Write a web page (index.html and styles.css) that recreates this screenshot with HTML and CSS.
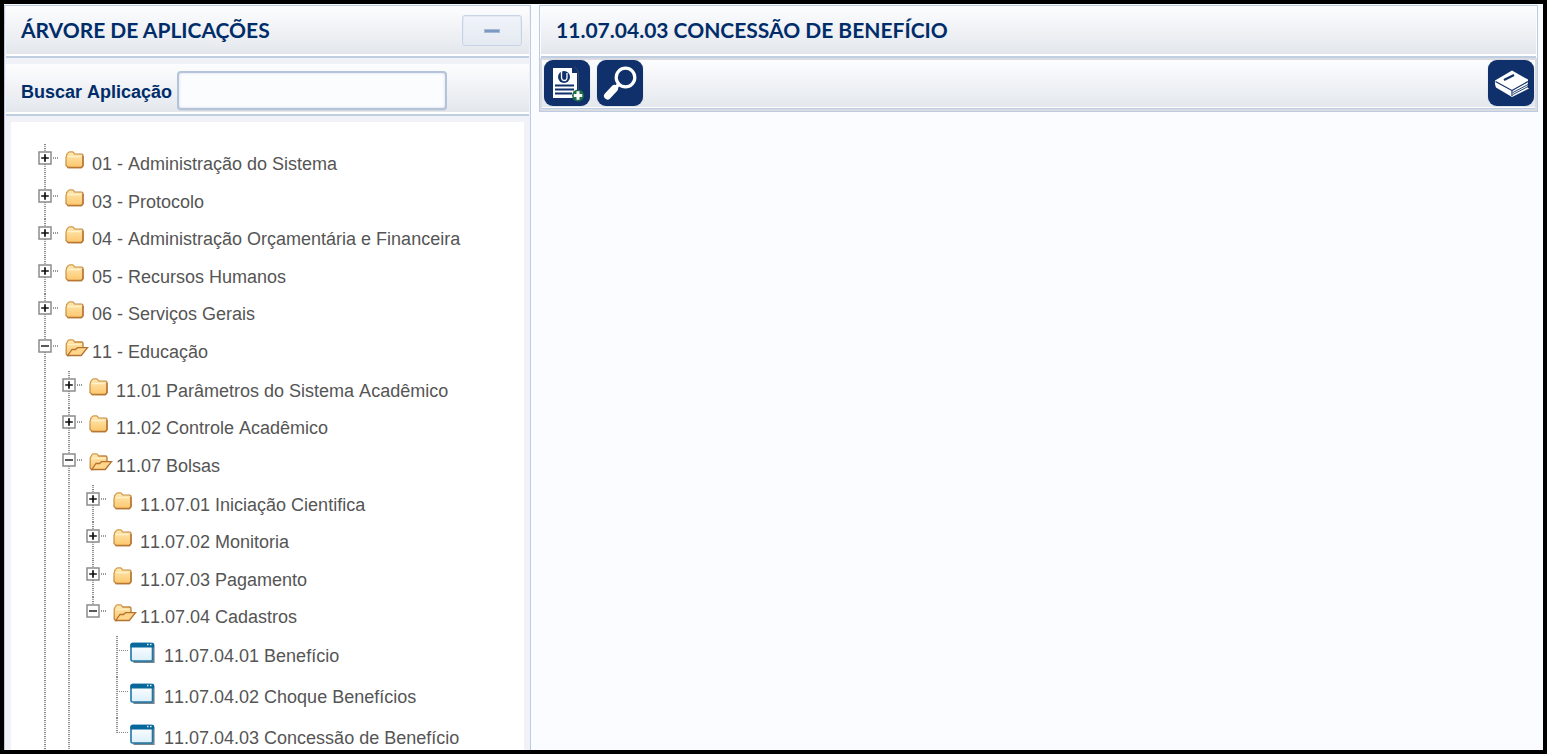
FILE: index.html
```html
<!DOCTYPE html>
<html lang="pt-BR">
<head>
<meta charset="utf-8">
<title>Concessão de Benefício</title>
<link rel="stylesheet" href="styles.css">
</head>
<body>
<svg class="defs" aria-hidden="true">
  <defs>
    <linearGradient id="gold" x1="0" y1="0" x2="0" y2="1"><stop offset="0" stop-color="#ffeab4"/><stop offset="1" stop-color="#fdc66c"/></linearGradient>
    <linearGradient id="edge" x1="0" y1="0" x2="1" y2="1"><stop offset="0" stop-color="#d9a14e"/><stop offset="1" stop-color="#a4662a"/></linearGradient>
    <linearGradient id="pane" x1="0" y1="0" x2="0" y2="1"><stop offset="0" stop-color="#fff"/><stop offset="1" stop-color="#dceffa"/></linearGradient>
    <symbol id="plus" viewBox="0 0 14 14"><rect x="1" y="1" width="12" height="12" fill="#fff" stroke="#8c8c8c" stroke-width="1.5"/><path d="M3.200 7h7.600M7 3.200v7.600" stroke="#111" stroke-width="1.700"/></symbol>
    <symbol id="minus" viewBox="0 0 14 14"><rect x="1" y="1" width="12" height="12" fill="#fff" stroke="#8c8c8c" stroke-width="1.500"/><path d="M3 7h8" stroke="#222" stroke-width="1.5"/></symbol>
    <symbol id="closed" viewBox="0 0 24 18"><path d="M1.500 5.500V3.800L3.500 1.300Q4 .8 5 .8H7.500Q8.500.8 9 2L9.600 3H16.500Q18 3 18 4.500V14.500L16.500 16.700H3.200L1 14.500V6z" fill="url(#gold)" stroke="url(#edge)" stroke-width="1.200"/><path d="M2.500 5.600H15.800" fill="none" stroke="#fff3cf" stroke-width="1.200"/><path d="M2.500 16.500H16.300L18 14.800V5" fill="none" stroke="#b87834" stroke-width="1.400"/></symbol>
    <symbol id="open" viewBox="0 0 24 18"><path d="M1.200 15V5L3.200 1.300Q3.500.8 4.500.8H7.500Q8.500.8 9 2L9.600 3H16.500Q18 3 18 4.500V9L4 16.500H2.500z" fill="url(#gold)" stroke="url(#edge)" stroke-width="1.300"/><path d="M2.800 16.500L7 10.500H10.500L12.500 8.700H22.500L16.200 16.500z" fill="#ffd68a" stroke="#b57332" stroke-width="1.300"/><path d="M3 5.500H16" stroke="#fff0c8"/></symbol>
    <symbol id="window" viewBox="0 0 25 22"><path d="M23.700 2.500V20H3.500" fill="none" stroke="#75848e" stroke-width="1.800"/><rect x="1" y="1.500" width="21.500" height="17.500" rx="1.500" fill="url(#pane)" stroke="#1f77a4" stroke-width="1.600"/><path d="M2 .8H23Q24 1 24 2V5.500H.5V2.500z" fill="#08689b"/><path d="M17 2.500h1.500M20 2.500h1.500" stroke="#d5edf8" stroke-width="1.500"/></symbol>
  </defs>
</svg>
<div class="app">
  <aside class="sidebar">
    <header class="bar">
      <h2 class="title">ÁRVORE DE APLICAÇÕES</h2>
      <button class="collapse" type="button" aria-label="Recolher"><span class="dash"></span></button>
    </header>
    <form class="bar search">
      <label class="caption" for="busca">Buscar Aplicação</label>
      <input id="busca" class="field" type="text">
    </form>
    <nav class="tree">
      <ul class="level">
        <li class="node"><div class="row"><button class="toggle" type="button" aria-label="Expandir"><svg><use href="#plus"/></svg></button><svg class="folder"><use href="#closed"/></svg><span class="name">01 - Administração do Sistema</span></div></li>
        <li class="node"><div class="row"><button class="toggle" type="button" aria-label="Expandir"><svg><use href="#plus"/></svg></button><svg class="folder"><use href="#closed"/></svg><span class="name">03 - Protocolo</span></div></li>
        <li class="node"><div class="row"><button class="toggle" type="button" aria-label="Expandir"><svg><use href="#plus"/></svg></button><svg class="folder"><use href="#closed"/></svg><span class="name">04 - Administração Orçamentária e Financeira</span></div></li>
        <li class="node"><div class="row"><button class="toggle" type="button" aria-label="Expandir"><svg><use href="#plus"/></svg></button><svg class="folder"><use href="#closed"/></svg><span class="name">05 - Recursos Humanos</span></div></li>
        <li class="node"><div class="row"><button class="toggle" type="button" aria-label="Expandir"><svg><use href="#plus"/></svg></button><svg class="folder"><use href="#closed"/></svg><span class="name">06 - Serviços Gerais</span></div></li>
        <li class="node"><div class="row"><button class="toggle" type="button" aria-label="Recolher"><svg><use href="#minus"/></svg></button><svg class="folder"><use href="#open"/></svg><span class="name">11 - Educação</span></div>
          <ul class="level nested">
            <li class="node"><div class="row"><button class="toggle" type="button" aria-label="Expandir"><svg><use href="#plus"/></svg></button><svg class="folder"><use href="#closed"/></svg><span class="name">11.01 Parâmetros do Sistema Acadêmico</span></div></li>
            <li class="node"><div class="row"><button class="toggle" type="button" aria-label="Expandir"><svg><use href="#plus"/></svg></button><svg class="folder"><use href="#closed"/></svg><span class="name">11.02 Controle Acadêmico</span></div></li>
            <li class="node"><div class="row"><button class="toggle" type="button" aria-label="Recolher"><svg><use href="#minus"/></svg></button><svg class="folder"><use href="#open"/></svg><span class="name">11.07 Bolsas</span></div>
              <ul class="level nested">
                <li class="node"><div class="row"><button class="toggle" type="button" aria-label="Expandir"><svg><use href="#plus"/></svg></button><svg class="folder"><use href="#closed"/></svg><span class="name">11.07.01 Iniciação Cientifica</span></div></li>
                <li class="node"><div class="row"><button class="toggle" type="button" aria-label="Expandir"><svg><use href="#plus"/></svg></button><svg class="folder"><use href="#closed"/></svg><span class="name">11.07.02 Monitoria</span></div></li>
                <li class="node"><div class="row"><button class="toggle" type="button" aria-label="Expandir"><svg><use href="#plus"/></svg></button><svg class="folder"><use href="#closed"/></svg><span class="name">11.07.03 Pagamento</span></div></li>
                <li class="node end"><div class="row"><button class="toggle" type="button" aria-label="Recolher"><svg><use href="#minus"/></svg></button><svg class="folder"><use href="#open"/></svg><span class="name">11.07.04 Cadastros</span></div>
                  <ul class="level nested">
                    <li class="node leaf"><div class="row"><svg class="win"><use href="#window"/></svg><span class="name">11.07.04.01 Benefício</span></div></li>
                    <li class="node leaf"><div class="row"><svg class="win"><use href="#window"/></svg><span class="name">11.07.04.02 Choque Benefícios</span></div></li>
                    <li class="node leaf end"><div class="row"><svg class="win"><use href="#window"/></svg><span class="name">11.07.04.03 Concessão de Benefício</span></div></li>
                  </ul>
                </li>
              </ul>
            </li>
          </ul>
        </li>
      </ul>
    </nav>
  </aside>
  <main class="content">
    <section class="panel">
      <header class="bar">
        <h1 class="title">11.07.04.03 CONCESSÃO DE BENEFÍCIO</h1>
      </header>
      <div class="toolbar">
        <button class="tool" type="button" aria-label="Novo">
          <svg viewBox="0 0 46 46"><path d="M9 8H28V13H33V38H9z" fill="#fff"/><path d="M30 6.500Q34 9 34.500 14V29" fill="none" stroke="#3b4a66"/><circle cx="20" cy="17" r="6" fill="#10306b"/><path d="M17.500 11V17Q17.500 20.500 20.500 20.500Q23 20.500 23 17V13" fill="none" stroke="#fff" stroke-width="1.300"/><path d="M11 25.500H30M11 29.500H30M11 33.500H28" stroke="#10306b" stroke-width="2"/><circle cx="34" cy="35.500" r="5.900" fill="#1e7044"/><path d="M34 31.300v8.400M29.800 35.500h8.400" stroke="#fff" stroke-width="3"/></svg>
        </button>
        <button class="tool" type="button" aria-label="Pesquisar">
          <svg viewBox="0 0 46 46"><circle cx="28.500" cy="17.500" r="9.300" fill="none" stroke="#fff" stroke-width="3.200"/><path d="M22 24L18.500 28" stroke="#fff" stroke-width="3.500"/><path d="M17.500 28.500L10.500 36" stroke="#fff" stroke-width="7" stroke-linecap="round"/></svg>
        </button>
        <button class="tool help" type="button" aria-label="Manual">
          <svg viewBox="0 0 46 46"><path d="M7 20.500L24 10.500L40 19.500V22L39.500 27.500L41 28.500L24 37L8 27.500Q6.500 24 7 20.500z" fill="#fff"/><path d="M7.500 21.500L24 30.500V36M24 30.500L40 21.500" fill="none" stroke="#10306b" stroke-width="1.200"/><path d="M25 32.500L40 24.500M25 34.500L40 26.500" fill="none" stroke="#10306b" stroke-width=".9"/><path d="M16 20L26 15" stroke="#10306b" stroke-width="2.200"/></svg>
        </button>
      </div>
    </section>
  </main>
</div>
</body>
</html>
```
FILE: styles.css
```css
* { box-sizing: border-box; }
body {
  margin: 0;
  background: #fbfcff;
  color: #555;
  font: 18px/24px "Liberation Sans", Arial, sans-serif;
  font-kerning: none;
}
.defs { position: absolute; width: 0; height: 0; }
button { padding: 0; margin: 0; cursor: pointer; }
.app {
  display: flex;
  gap: 8px;
  height: 100vh;
  padding-top: 1px;
  border: 4px solid #000;
  overflow: hidden;
}
.sidebar {
  flex: 0 0 34.25%;
  min-width: 0;
  padding: 0 1px;
  border: 1px solid #bccbdf;
  border-bottom: 0;
  background: #f1f2f8;
  overflow: hidden;
}
.content { flex: 1; min-width: 0; padding-right: 5px; }
.panel { border: 1px solid #bccbdf; }
.panel .bar { margin: 0 1px; }
.bar {
  display: flex;
  align-items: center;
  height: 52px;
  padding: 0 7px 2px 15px;
  border-bottom: 2px solid #c0cee1;
  background: linear-gradient(#fdfdff, #e3e7ec) no-repeat 0 0 / 100% 48px, #fff;
}
.title {
  flex: 1;
  margin: 0;
  color: #002d69;
  font: bold 21px/26px Lato, sans-serif;
  font-kerning: normal;
  white-space: nowrap;
}
.collapse {
  display: flex;
  align-items: center;
  justify-content: center;
  width: 60px;
  height: 31px;
  border: 1px solid #c8d4e5;
  border-radius: 3px;
  background: linear-gradient(#f0f3f9, #e5eaf2);
  box-shadow: inset 0 0 0 1px #e3eaf4;
}
.dash { width: 16px; height: 4px; margin-top: 2px; background: #7d99c2; border: 1px solid #a5b9d6; }
.search {
  gap: 5px;
  margin: 6px 0;
  padding-top: 4px;
  color: #002d69;
  font-weight: bold;
}
.caption { padding-top: 3px; }
.field {
  width: 270px;
  height: 39px;
  padding: 0 8px;
  border: 2px solid #b4c3d9;
  border-radius: 4px;
  background: #fbfcfe;
  box-shadow: inset 0 0 3px #d5dce7, 0 1px 0 #d5d8dd;
  font: inherit;
  font-weight: normal;
}
.tree {
  min-height: 100%;
  margin: 0 5px;
  padding: 22px 0 0 27px;
  background: #fff;
}
.level { margin: 0; padding: 0; list-style: none; }
.nested { padding-left: 24px; }
.nested .node:first-child { margin-top: 2px; }
.nested .leaf:first-child { margin-top: 1px; }
.node {
  background: repeating-linear-gradient(#888 0 1px, #eee 1px 2px, #aaa 2px 3px, #fff 3px 4px) no-repeat 6px 0 / 2px 100%;
}
.node.end { background-size: 2px 15px; }
.row { display: flex; align-items: flex-start; height: 38px; padding-top: 7px; white-space: nowrap; }
.node:nth-child(even) > .row { height: 37px; }
.nested > .node > .row { height: 37px; }
.nested > .node:nth-child(even) > .row { height: 38px; }
.toggle {
  width: 27px;
  height: 14px;
  border: 0;
  background: repeating-linear-gradient(90deg, #999 0 1px, transparent 1px 2px) no-repeat 15px 6px / 5px 2px;
}
.toggle svg { display: block; width: 14px; height: 14px; }
.folder { width: 24px; height: 18px; margin-right: 3px; }
.name { padding-top: 1px; line-height: 24px; }
.nested > .leaf > .row,
.nested > .leaf:nth-child(even) > .row {
  height: 41px;
  padding-top: 6px;
  padding-left: 20px;
  background: repeating-linear-gradient(90deg, #888 0 1px, transparent 1px 2px) no-repeat 7px 14px / 12px 1px;
}
.leaf .name { padding-top: 2px; }
.win { width: 25px; height: 22px; margin-right: 9px; }
.toolbar {
  display: flex;
  gap: 7px;
  padding: 0 1px 3px 2px;
  border: 2px solid #dadce1;
  background: linear-gradient(#fdfdff, #e3e7ec);
  box-shadow: inset 0 -1px 0 #bccbdf, inset 0 -2px 0 #fff;
}
.tool {
  width: 46px;
  height: 46px;
  border: 0;
  border-radius: 9px;
  background: #10306b;
  box-shadow: 0 0 1px #9eabc1;
}
.tool svg { display: block; width: 46px; height: 46px; }
.help { margin-left: auto; }
```
